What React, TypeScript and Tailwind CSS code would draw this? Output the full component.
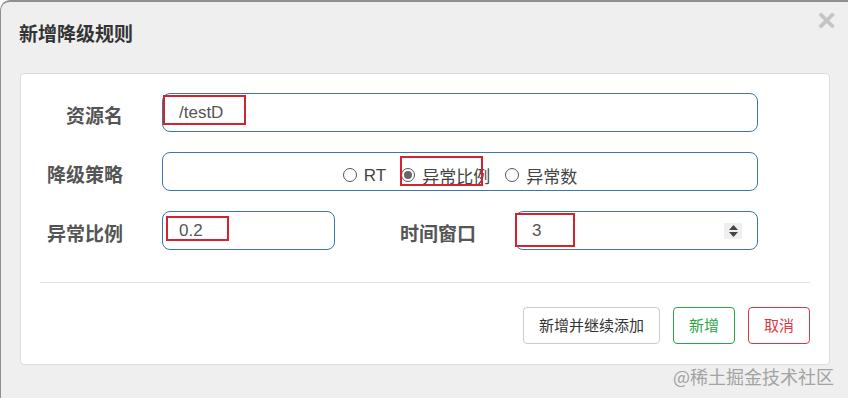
import React from 'react';

const cjk = { fontFamily: '"Noto Sans CJK SC", "Liberation Sans", sans-serif' };
const latin = { fontFamily: '"Liberation Sans", "Noto Sans CJK SC", sans-serif' };

function RedBox({ className }: { className: string }) {
    return <span className={`pointer-events-none absolute border-2 border-[#d4222f] ${className}`} />;
}

function Radio({ checked, label }: { checked?: boolean; label: string }) {
    return (
        <span className="flex items-center gap-[7px]">
            <span className="flex h-[14px] w-[14px] items-center justify-center rounded-full border border-[#555] bg-white">
                {checked && <span className="h-[8px] w-[8px] rounded-full bg-[#666]" />}
            </span>
            <span className="text-[17px] text-[#444]">{label}</span>
        </span>
    );
}

export default function App() {
    return (
        <div
            className="relative h-[398px] w-[848px] overflow-hidden rounded-tl-[10px] border-l border-t-2 border-[#8f8f8f] bg-[#efefef]"
            style={cjk}
        >
            {/* header */}
            <div className="flex h-[71px] items-start justify-between pl-[18px] pr-[12px]">
                <h4 className="mt-[17px] text-[19px] font-bold text-[#333]">新增降级规则</h4>
                <span className="mt-[2px] text-[32px] font-bold leading-none text-[#c4c4c4]" style={latin}>
                    ×
                </span>
            </div>

            {/* body panel */}
            <div className="ml-[19px] mr-[18px] h-[292px] rounded border border-[#dcdcdc] bg-white">
                <div className="flex flex-col gap-[20px] pt-[19px]">
                    <div className="flex items-center">
                        <label className="w-[102px] pt-[5px] text-right text-[19px] font-bold text-[#555]">资源名</label>
                        <div className="relative ml-[39px] flex h-[39px] w-[596px] items-center rounded-lg border border-[#3b77a8] pl-[16px] text-[17px] text-[#555]" style={latin}>
                            /testD
                            <RedBox className="left-0 top-[1px] h-[30px] w-[83px]" />
                        </div>
                    </div>

                    <div className="flex items-center">
                        <label className="w-[102px] pt-[5px] text-right text-[19px] font-bold text-[#555]">降级策略</label>
                        <div className="ml-[39px] flex h-[39px] w-[596px] items-end justify-center gap-[15px] rounded-lg border border-[#3b77a8] pb-[2px]">
                            <span style={latin}>
                                <Radio label="RT" />
                            </span>
                            <span className="relative">
                                <Radio checked label="异常比例" />
                                <RedBox className="-left-[1px] -top-[7px] h-[30px] w-[83px]" />
                            </span>
                            <Radio label="异常数" />
                        </div>
                    </div>

                    <div className="flex items-center">
                        <label className="w-[102px] pt-[5px] text-right text-[19px] font-bold text-[#555]">异常比例</label>
                        <div className="relative ml-[39px] flex h-[39px] w-[173px] items-center rounded-lg border border-[#3b77a8] pl-[16px] text-[17px] text-[#555]" style={latin}>
                            0.2
                            <RedBox className="left-[3px] top-[4px] h-[25px] w-[63px]" />
                        </div>
                        <label className="w-[141px] pt-[5px] text-right text-[19px] font-bold text-[#555]">时间窗口</label>
                        <div className="relative ml-[39px] flex h-[39px] w-[243px] items-center justify-between rounded-lg border border-[#3b77a8] pl-[16px] pr-[15px] text-[17px] text-[#555]" style={latin}>
                            3
                            <span className="flex h-[16px] w-[18px] flex-col items-center justify-center gap-[2px] bg-[#efefef]">
                                <svg width="9" height="5" viewBox="0 0 9 5"><path d="M4.5 0L9 5H0z" fill="#444" /></svg>
                                <svg width="9" height="5" viewBox="0 0 9 5"><path d="M0 0h9L4.5 5z" fill="#444" /></svg>
                            </span>
                            <RedBox className="-left-[1px] top-[1px] h-[34px] w-[60px]" />
                        </div>
                    </div>
                </div>

                <div className="mx-[19px] mt-[32px] border-t border-[#e3e3e3]" />

                <div className="mt-[24px] flex justify-end gap-[13px] pr-[19px]">
                    <button className="h-[37px] w-[137px] rounded border border-[#cccccc] bg-white text-[15px] text-[#333]">
                        新增并继续添加
                    </button>
                    <button className="h-[37px] w-[62px] rounded border border-[#28a745] bg-white text-[15px] text-[#28a745]">
                        新增
                    </button>
                    <button className="h-[37px] w-[62px] rounded border border-[#dc3545] bg-white text-[15px] text-[#dc3545]">
                        取消
                    </button>
                </div>
            </div>

            <span className="absolute bottom-[13px] right-[14px] text-[18px] leading-none text-[#a3a3a3]">@稀土掘金技术社区</span>
        </div>
    );
}
